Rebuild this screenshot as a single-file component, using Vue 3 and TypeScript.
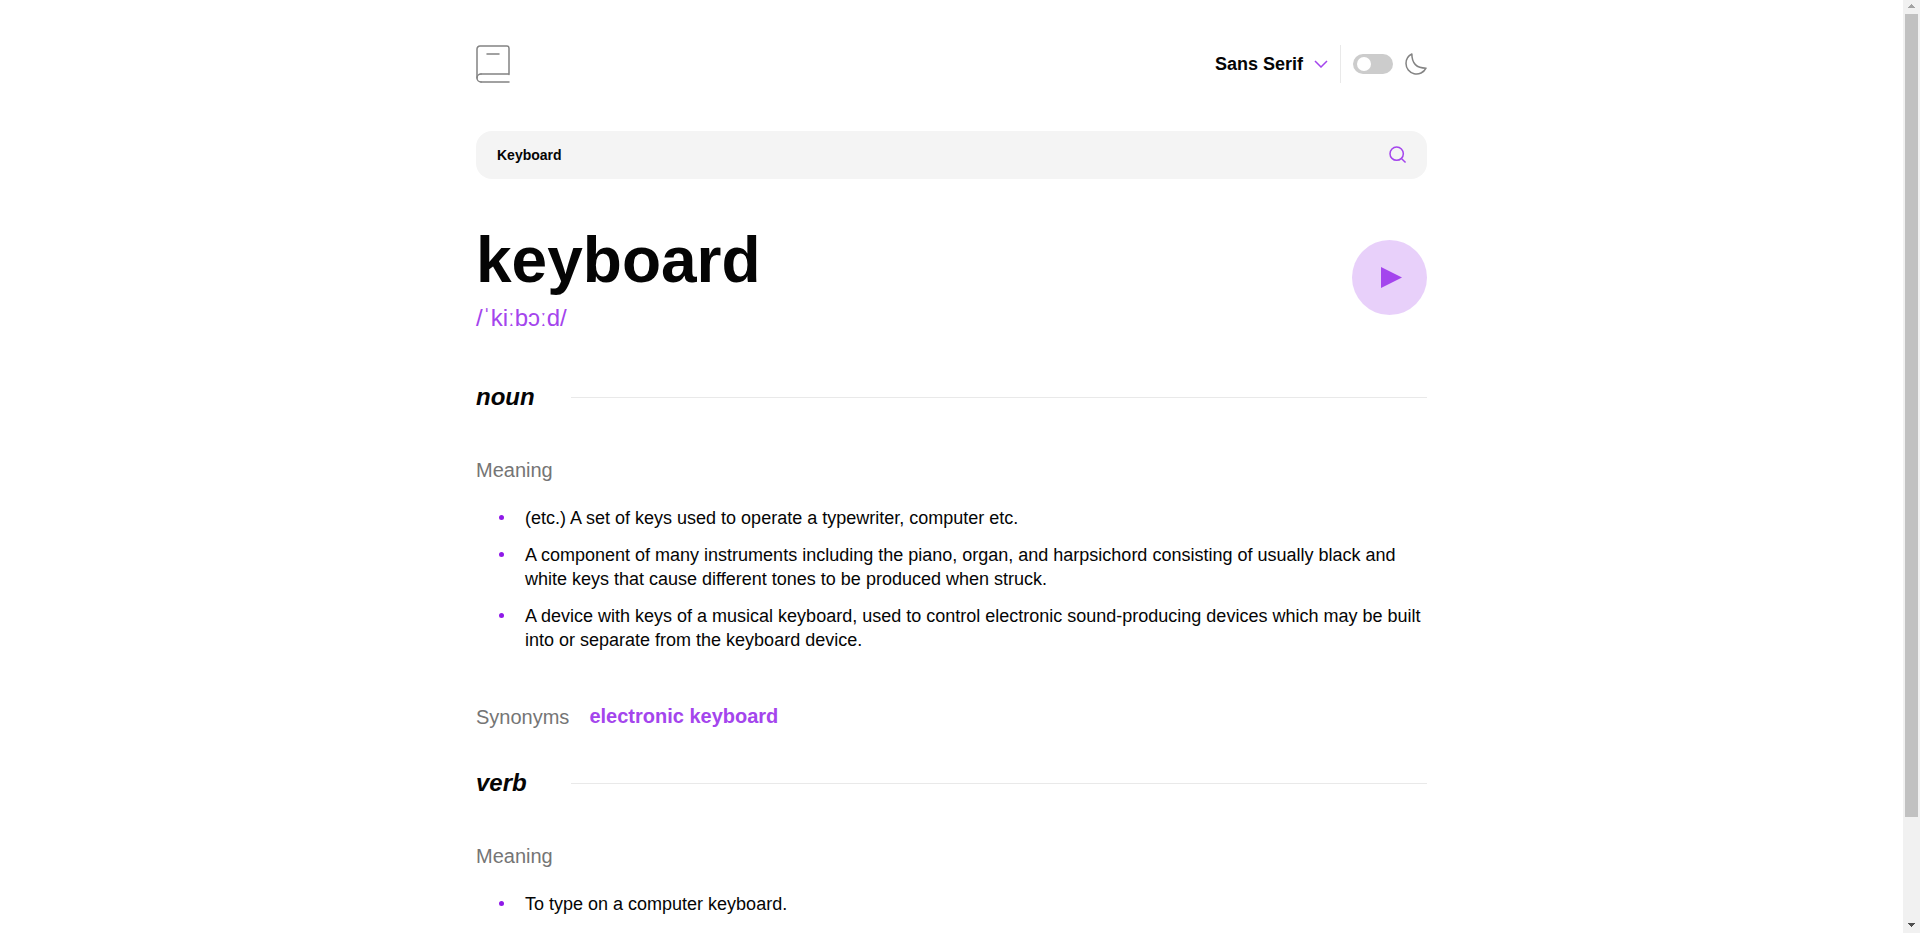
<script setup lang="ts">
import { ref } from 'vue'

interface Entry {
  part: string
  meanings: string[]
  synonyms: string[]
}

const query = ref('Keyboard')
const word = 'keyboard'
const phonetic = '/ˈkiːbɔːd/'

const entries: Entry[] = [
  {
    part: 'noun',
    meanings: [
      '(etc.) A set of keys used to operate a typewriter, computer etc.',
      'A component of many instruments including the piano, organ, and harpsichord consisting of usually black and white keys that cause different tones to be produced when struck.',
      'A device with keys of a musical keyboard, used to control electronic sound-producing devices which may be built into or separate from the keyboard device.',
    ],
    synonyms: ['electronic keyboard'],
  },
  { part: 'verb', meanings: ['To type on a computer keyboard.'], synonyms: [] },
]
</script>

<template>
  <div class="page">
    <main class="content">
      <header class="header">
        <svg class="logo" width="34" height="38" viewBox="0 0 34 38" fill="none" stroke="#838383" stroke-width="1.5" stroke-linecap="round">
          <path d="M1 33V4a3 3 0 0 1 3-3h26.8A2.2 2.2 0 0 1 33 3.2v26.228M5 29h28M5 37h28" />
          <path stroke-linejoin="round" d="M5 37a4 4 0 1 1 0-8" />
          <path d="M11 9h12" />
        </svg>
        <div class="controls">
          <button class="font-picker" type="button">
            Sans Serif
            <svg width="14" height="8" viewBox="0 0 14 8" fill="none" stroke="#a445ed" stroke-width="1.5">
              <path d="m1 1 6 6 6-6" />
            </svg>
          </button>
          <span class="divider"></span>
          <span class="switch"><span class="knob"></span></span>
          <svg class="moon" width="22" height="22" viewBox="0 0 22 22" fill="none" stroke="#838383" stroke-width="1.5" stroke-linecap="round" stroke-linejoin="round">
            <path d="M1 10.449a10.544 10.544 0 0 0 19.993 4.686C11.544 15.135 6.858 10.448 6.858 1A10.545 10.545 0 0 0 1 10.449Z" />
          </svg>
        </div>
      </header>

      <form class="search" @submit.prevent>
        <input v-model="query" class="search-input" type="text" spellcheck="false" />
        <svg width="18" height="18" viewBox="0 0 18 18" fill="none" stroke="#a445ed" stroke-width="1.5">
          <path d="m12.663 12.663 3.887 3.887M1 7.664a6.665 6.665 0 1 0 13.33 0 6.665 6.665 0 0 0-13.33 0Z" />
        </svg>
      </form>

      <section class="headline">
        <div>
          <h1 class="word">{{ word }}</h1>
          <p class="phonetic">{{ phonetic }}</p>
        </div>
        <svg class="play" width="75" height="75" viewBox="0 0 75 75" fill="#a445ed">
          <circle cx="37.5" cy="37.5" r="37.5" opacity="0.25" />
          <path d="M29 27v21l21-10.5z" />
        </svg>
      </section>

      <section v-for="entry in entries" :key="entry.part" class="entry">
        <div class="part-row">
          <h2 class="part">{{ entry.part }}</h2>
          <span class="rule"></span>
        </div>
        <h3 class="label">Meaning</h3>
        <ul class="meanings">
          <li v-for="meaning in entry.meanings" :key="meaning" class="meaning">
            <span class="bullet"></span>
            <p class="definition">{{ meaning }}</p>
          </li>
        </ul>
        <div v-if="entry.synonyms.length" class="synonyms">
          <h3 class="label">Synonyms</h3>
          <span v-for="synonym in entry.synonyms" :key="synonym" class="synonym">{{ synonym }}</span>
        </div>
      </section>
    </main>

    <aside class="scrollbar">
      <svg width="17" height="14" viewBox="0 0 17 14" fill="#a3a3a3" shape-rendering="crispEdges">
        <path d="M8 4h1v1h1v1h1v1h1v1H5V7h1V6h1V5h1z" />
      </svg>
      <span class="thumb"></span>
      <svg class="arrow-down" width="17" height="14" viewBox="0 0 17 14" fill="#505050" shape-rendering="crispEdges">
        <path d="M5 4h7v1h-1v1h-1v1H9v1H8V7H7V6H6V5H5z" />
      </svg>
    </aside>
  </div>
</template>

<style>
body {
  margin: 0;
  overflow: hidden;
}
</style>

<style scoped>
.page {
  display: flex;
  height: 100vh;
  overflow: hidden;
  background: #fff;
  color: #050505;
  font-family: "Liberation Sans", Arial, sans-serif;
}

h1,
h2,
h3,
p,
ul {
  margin: 0;
  padding: 0;
}

.content {
  flex: 0 0 951px;
  margin: 0 auto;
  padding-top: 45px;
}

.header {
  display: flex;
  align-items: center;
  justify-content: space-between;
  height: 38px;
}

.controls {
  display: flex;
  align-items: center;
}

.font-picker {
  display: flex;
  align-items: center;
  gap: 11px;
  padding: 0;
  border: 0;
  background: none;
  color: #050505;
  font: bold 18px/24px "Liberation Sans", Arial, sans-serif;
}

.divider {
  width: 1px;
  height: 38px;
  margin: 0 12px;
  background: #e9e9e9;
}

.switch {
  display: flex;
  align-items: center;
  box-sizing: border-box;
  width: 40px;
  height: 20px;
  padding: 0 4px;
  border-radius: 10px;
  background: #ccc;
}

.knob {
  width: 14px;
  height: 14px;
  border-radius: 50%;
  background: #fff;
}

.moon {
  margin-left: 12px;
}

.search {
  display: flex;
  align-items: center;
  justify-content: space-between;
  box-sizing: border-box;
  height: 48px;
  margin-top: 48px;
  padding: 0 20.5px 0 21px;
  border-radius: 16px;
  background: #f4f4f4;
}

.search-input {
  flex: 1;
  padding: 0;
  border: 0;
  outline: 0;
  background: none;
  color: #050505;
  font: bold 14px/20px "Liberation Sans", Arial, sans-serif;
}

.headline {
  display: flex;
  align-items: center;
  justify-content: space-between;
  height: 105px;
  margin-top: 46px;
}

.word {
  font-size: 64px;
  line-height: 72px;
}

.phonetic {
  margin-top: 8px;
  color: #a445ed;
  font-size: 24px;
  line-height: 28px;
}

.entry {
  margin-top: 50px;
}

.entry + .entry {
  margin-top: 37px;
}

.part-row {
  display: flex;
  align-items: center;
  height: 34px;
}

.part {
  width: 95px;
  font-size: 24px;
  font-style: italic;
  line-height: 28px;
}

.rule {
  flex: 1;
  height: 1px;
  background: #e9e9e9;
}

.label {
  color: #757575;
  font-size: 20px;
  font-weight: 400;
  line-height: 24px;
}

.part-row + .label {
  margin-top: 44px;
}

.meanings {
  display: grid;
  gap: 13px;
  margin-top: 24px;
  list-style: none;
}

.meaning {
  display: flex;
  padding-left: 23px;
}

.bullet {
  flex: none;
  width: 5px;
  height: 5px;
  margin: 9px 21px 0 0;
  border-radius: 50%;
  background: #8f19e8;
}

.definition {
  font-size: 18px;
  line-height: 24px;
}

.synonyms {
  display: flex;
  gap: 20px;
  margin-top: 53px;
}

.synonym {
  color: #a445ed;
  font-size: 20px;
  font-weight: 700;
  line-height: 22px;
}

.scrollbar {
  display: flex;
  flex: 0 0 17px;
  flex-direction: column;
  align-items: center;
  margin-right: 2px;
  background: #f1f1f1;
}

.thumb {
  width: 13px;
  height: 803px;
  background: #c1c1c1;
}

.arrow-down {
  margin-top: auto;
}
</style>
